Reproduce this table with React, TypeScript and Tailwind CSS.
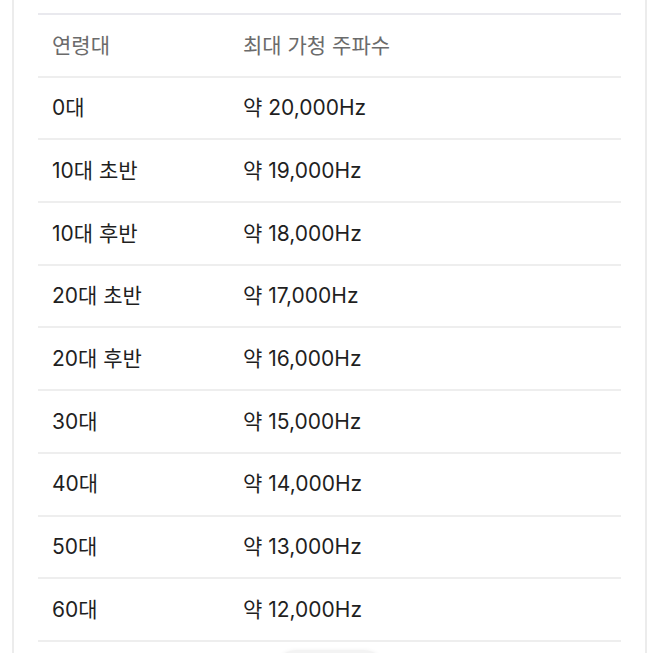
import React from "react";

const rows: [string, string][] = [
  ["0대", "약 20,000Hz"],
  ["10대 초반", "약 19,000Hz"],
  ["10대 후반", "약 18,000Hz"],
  ["20대 초반", "약 17,000Hz"],
  ["20대 후반", "약 16,000Hz"],
  ["30대", "약 15,000Hz"],
  ["40대", "약 14,000Hz"],
  ["50대", "약 13,000Hz"],
  ["60대", "약 12,000Hz"],
];

export default function App() {
  return (
    <div
      className="w-[660px] h-[653px] overflow-hidden bg-white"
      style={{ fontFamily: 'Inter, "Noto Sans CJK KR", sans-serif' }}
    >
      <div className="ml-[12px] mr-[13px] border-x-2 border-[#ececec] px-[24px] pt-[13px] pb-[8px]">
        <div className="border-t-2 border-[#e9e9ee]">
          <div className="flex items-center h-[62.7px] border-b-2 border-[#eeeeee] text-[21px] text-[#6b6b6b]">
            <div className="w-[205px] pl-[14px]">연령대</div>
            <div>최대 가청 주파수</div>
          </div>
          {rows.map(([a, b]) => (
            <div
              key={a}
              className="flex items-center h-[62.7px] border-b-2 border-[#eeeeee] text-[21px] text-[#1f1f1f]"
            >
              <div className="w-[205px] pl-[14px]">{a}</div>
              <div>{b}</div>
            </div>
          ))}
        </div>
        <div className="flex justify-center mt-[8px]">
          <div className="w-[108px] h-[40px] rounded-full bg-[#f3f3f3] shadow-[0_0_4px_rgba(0,0,0,0.06)]" />
        </div>
      </div>
    </div>
  );
}
